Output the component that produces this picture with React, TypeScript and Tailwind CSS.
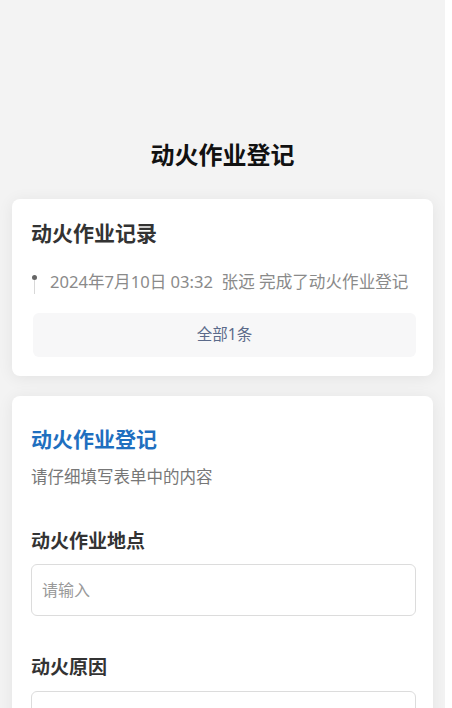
import React from "react";

export default function App() {
  const font = { fontFamily: '"Noto Sans", "Noto Sans CJK SC", sans-serif' };
  return (
    <div className="w-[445px] min-h-[708px] bg-[#f3f3f3] pt-[139px] pb-[40px]" style={font}>
      <h1 className="text-center text-[24px] leading-[32px] font-bold text-[#111]">动火作业登记</h1>

      <div className="mx-[12px] mt-[28px] rounded-[8px] bg-white pl-[19px] pr-[17px] pt-[20px] pb-[19px] shadow-[0_2px_16px_rgba(0,0,0,0.07)]">
        <h2 className="text-[21px] leading-[28px] font-bold text-[#333]">动火作业记录</h2>
        <div className="mt-[23px] flex items-start">
          <div className="flex w-[19px] flex-col items-start pl-[1px] pt-[5px]">
            <div className="h-[5px] w-[5px] rounded-full bg-[#666]"></div>
            <div className="ml-[2px] h-[14px] w-px bg-[#d8d8d8]"></div>
          </div>
          <p className="text-[16.6px] leading-[24px] text-[#8a8a8a] whitespace-nowrap">
            2024年7月10日 03:32&nbsp;&nbsp;张远 完成了动火作业登记
          </p>
        </div>
        <button className="ml-[2px] mt-[19px] flex h-[44px] w-[383px] items-center justify-center rounded-[6px] bg-[#f7f7f8] text-[15.5px] text-[#5b6a8a]">
          全部1条
        </button>
      </div>

      <div className="mx-[12px] mt-[20px] rounded-[8px] bg-white px-[19px] pt-[29px] pb-[30px] shadow-[0_2px_16px_rgba(0,0,0,0.07)]">
        <h2 className="text-[21px] leading-[28px] font-bold text-[#1f6fbf]">动火作业登记</h2>
        <p className="mt-[12px] text-[16.5px] leading-[24px] text-[#777]">请仔细填写表单中的内容</p>

        <div className="mt-[39px]">
          <label className="block text-[19px] leading-[26px] font-bold text-[#333]">动火作业地点</label>
          <input
            className="mt-[10px] block h-[52px] w-[385px] rounded-[6px] border border-[#dcdcdc] bg-white px-[10px] text-[16px] text-[#333] placeholder:text-[#999] outline-none"
            placeholder="请输入"
            style={font}
          />
        </div>

        <div className="mt-[38px]">
          <label className="block text-[19px] leading-[26px] font-bold text-[#333]">动火原因</label>
          <input
            className="mt-[11px] block h-[52px] w-[385px] rounded-[6px] border border-[#dcdcdc] bg-white px-[10px] text-[16px] text-[#333] placeholder:text-[#999] outline-none"
            placeholder="请输入"
            style={font}
          />
        </div>
      </div>
    </div>
  );
}
